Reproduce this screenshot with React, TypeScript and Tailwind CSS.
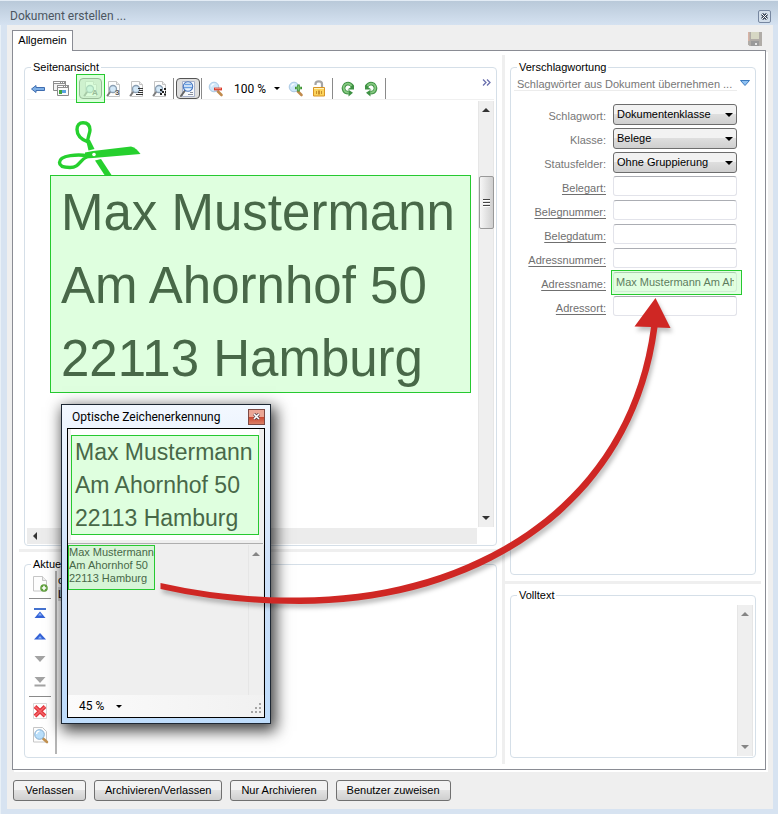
import React from "react";
import type { ReactNode } from "react";

// DATA

const addressLines = ["Max Mustermann", "Am Ahornhof 50", "22113 Hamburg"];

interface SelectField {
  id: string;
  label: string;
  value: string;
}

const selectFields: SelectField[] = [
  { id: "schlagwort", label: "Schlagwort:", value: "Dokumentenklasse" },
  { id: "klasse", label: "Klasse:", value: "Belege" },
  { id: "statusfelder", label: "Statusfelder:", value: "Ohne Gruppierung" },
];

interface TextField {
  id: string;
  label: string;
  value?: string;
}

const textFields: TextField[] = [
  { id: "belegart", label: "Belegart:" },
  { id: "belegnummer", label: "Belegnummer:" },
  { id: "belegdatum", label: "Belegdatum:" },
  { id: "adressnummer", label: "Adressnummer:" },
  {
    id: "adressname",
    label: "Adressname:",
    value: "Max Mustermann Am Ahornhof 50",
  },
  { id: "adressort", label: "Adressort:" },
];

const actions = [
  "Verlassen",
  "Archivieren/Verlassen",
  "Nur Archivieren",
  "Benutzer zuweisen",
];

// ICONS

function Lens({ cx, cy, r }: { cx: number; cy: number; r: number }) {
  return (
    <circle cx={cx} cy={cy} r={r} fill="#d3e8f8" stroke="#8b9fb3" strokeWidth="1.3" />
  );
}

function PageIcon({ children }: { children?: ReactNode }) {
  return (
    <svg width="16" height="18" viewBox="0 0 16 18">
      <path d="M2.5 1.5h8l3 3v12h-11z" fill="#fdfdfd" stroke="#c4c4c4" />
      <path d="M10.5 1.5v3h3" fill="#eee" stroke="#c4c4c4" />
      <path d="M4.5 11.5L1.5 15.5" stroke="#7d7d7d" strokeWidth="2" strokeLinecap="round" />
      <Lens cx={7} cy={9} r={3.5} />
      {children}
    </svg>
  );
}

function LetterIcon({ letter }: { letter: string }) {
  return (
    <PageIcon>
      <text x="9" y="15" fontSize="8" fontWeight="bold" fontFamily="Liberation Sans, sans-serif" fill="#555">
        {letter}
      </text>
    </PageIcon>
  );
}

function LinesIcon() {
  return (
    <PageIcon>
      <path d="M9 8.5h5M10 10.5h4M9 12.5h5M7 14.5h7" stroke="#333" />
    </PageIcon>
  );
}

function BarcodeIcon() {
  return (
    <PageIcon>
      <path
        d="M8 9h2v2H8zM12 8h2v2h-2zM10 11h2v2h-2zM13 11h1v2h-1zM8 13h2v2H8zM12 13.5h2v2h-2z"
        fill="#222"
      />
    </PageIcon>
  );
}

function BackIcon() {
  return (
    <svg width="16" height="16" viewBox="0 0 16 16">
      <path d="M1.5 8l4.500-3.500v2h8.500v3H6v2z" fill="#7fb0e6" stroke="#3f6db0" strokeLinejoin="round" />
    </svg>
  );
}

function WindowsIcon() {
  return (
    <svg width="18" height="18" viewBox="0 0 18 18">
      <path d="M1.5 1.5h12v9h-12z" fill="#f3f3f3" stroke="#8a8a8a" />
      <path d="M1 1h13v3H1z" fill="#8f8f8f" />
      <path d="M2 2.500h6M9 2.500h1M11 2.500h1" stroke="#fff" />
      <path d="M5.5 5.500h11v10h-11z" fill="#fafafa" stroke="#8a8a8a" />
      <path d="M5 5h12v3H5z" fill="#8f8f8f" />
      <path d="M6 6.500h5M12 6.500h1M14 6.500h1" stroke="#fff" />
      <path d="M7 10h3v4H7z" fill="#3fa33f" />
      <path d="M10 10h4v3h-4z" fill="#58a3e0" />
    </svg>
  );
}

function GlobeLensIcon() {
  return (
    <svg width="18" height="18" viewBox="0 0 18 18">
      <path d="M3.5 1.5h12v15h-12z" fill="#f7f9fc" stroke="#a9b3cc" />
      <path d="M11 12.500h3M9 14.500h5" stroke="#8a8f9c" />
      <path d="M6 10.500L2 16" stroke="#666" strokeWidth="2" strokeLinecap="round" />
      <circle cx="9" cy="6.500" r="4.700" fill="#eaf3fc" stroke="#4a78c0" strokeWidth="1.100" />
      <path d="M5.500 4.500h7M5 7.500h8" stroke="#6ba0e2" strokeWidth="1.500" fill="none" />
    </svg>
  );
}

function ZoomIcon({ plus }: { plus?: boolean }) {
  return (
    <svg width="16" height="16" viewBox="0 0 16 16">
      <path d="M9.500 10l4 4" stroke="#c08a4c" strokeWidth="2.600" strokeLinecap="round" />
      <circle cx="6" cy="6" r="4.800" fill="#cfe7f9" stroke="#a9c8e4" />
      <path d="M3.500 5.500a3 3 0 013-2.500" stroke="#fff" strokeWidth="1.200" fill="none" />
      {plus ? (
        <path d="M10.500 3.500v7M7 7h7" stroke="#3d8f35" strokeWidth="2.600" />
      ) : (
        <path d="M6 8h8" stroke="#d93a2b" strokeWidth="2.800" />
      )}
      {plus ? (
        <path d="M10.500 4.500v5M8 7h5" stroke="#7cc96f" strokeWidth="1" />
      ) : (
        <path d="M7 7.700h6" stroke="#f39a8c" strokeWidth="1" />
      )}
    </svg>
  );
}

function LockIcon() {
  return (
    <svg width="16" height="18" viewBox="0 0 16 18">
      <path d="M4.500 5V4a3.200 2.500 0 016.500 0v4" fill="none" stroke="#a5a5a5" strokeWidth="2.200" />
      <path d="M2.500 7.500h11v8.500h-11z" fill="#fbd45c" stroke="#d89426" />
      <path d="M3 8.500h10" stroke="#fff3bd" />
      <path d="M5 11h1v3H5zM7 10.500h2v4H7zM10 11h1v3h-1z" fill="#c98f2c" />
    </svg>
  );
}

function RotateIcon({ right }: { right?: boolean }) {
  return (
    <svg width="16" height="16" viewBox="0 0 16 16" className={right ? "-scale-x-100" : ""}>
      <path d="M12.500 6A4.500 4.500 0 103.700 8.500c.5 2 2.300 3.300 5 3.300" fill="none" stroke="#3f9244" strokeWidth="3.600" />
      <path d="M7.500 8.500h6.500V4z" fill="#3f9244" />
      <path d="M8.500 8.800l4.500 3-4.500 3.700z" fill="#3f9244" />
      <path d="M11.500 5A4 4 0 104 8.500c.4 2 2.300 3 4.500 3.200" fill="none" stroke="#86c981" strokeWidth="1.800" />
    </svg>
  );
}

function SaveIcon() {
  return (
    <svg width="14" height="14" viewBox="0 0 14 14">
      <path d="M0 0h14v14H1.500L0 12.500z" fill="#b0aca7" />
      <path d="M3 0h8v7H3z" fill="#d6d7c4" />
      <path d="M0 0h1.500v9H0z" fill="#d8b3a5" />
      <path d="M3 9h8v5H3z" fill="#9a9a9a" />
      <path d="M7 11h2v2H7z" fill="#e6e6e6" />
    </svg>
  );
}

function NewPageIcon() {
  return (
    <svg width="18" height="18" viewBox="0 0 18 18">
      <path d="M2.500 1.500h9l4 4v10.500h-13z" fill="#fdfdfd" stroke="#c6c6c6" />
      <path d="M11.500 1.500v4h4" fill="#eee" stroke="#c6c6c6" />
      <circle cx="13" cy="13" r="3.800" fill="#5f9f3c" />
      <path d="M13 10.800v4.400M10.800 13h4.400" stroke="#fff" strokeWidth="1.600" />
    </svg>
  );
}

function MoveIcon({ kind }: { kind: "top" | "up" | "down" | "bottom" }) {
  return (
    <svg width="12" height="12" viewBox="0 0 12 12">
      {kind === "top" && <path d="M0 1h12v2H0z" fill="#4472cf" />}
      {kind === "top" && <path d="M6 4.500l5.500 6.500H.5z" fill="#3462d6" />}
      {kind === "up" && <path d="M6 3l6 6.500H0z" fill="#3462d6" />}
      {(kind === "top" || kind === "up") && <path d="M4 8.500l2-2.500 2 2.500z" fill="#8db4f7" />}
      {kind === "down" && <path d="M6 9l5.500-6H.5z" fill="#a3a3a3" />}
      {kind === "bottom" && <path d="M6 7L11.500 1H.5z" fill="#a3a3a3" />}
      {kind === "bottom" && <path d="M.5 8.500h11v2H.5z" fill="#a3a3a3" />}
    </svg>
  );
}

function DeleteIcon() {
  return (
    <svg width="16" height="16" viewBox="0 0 16 16">
      <path d="M1.500.500h13v15h-13z" fill="#fff" stroke="#d9d9d9" />
      <path d="M3 3.500l10 9.500M13 3.500L3 13" stroke="#e2333b" strokeWidth="3.800" />
      <path d="M3 3.500l10 9.500M13 3.500L3 13" stroke="#f4666a" strokeWidth="1.600" />
    </svg>
  );
}

function PreviewIcon() {
  return (
    <svg width="18" height="18" viewBox="0 0 18 18">
      <path d="M2.500 1.500h9l4 4v10.500h-13z" fill="#fdfdfd" stroke="#c6c6c6" />
      <path d="M12 12.500l4 3.500" stroke="#c1904f" strokeWidth="2.600" strokeLinecap="round" />
      <circle cx="8.500" cy="8.500" r="4.800" fill="#b8defa" stroke="#86aed0" />
      <path d="M5.500 8a3 3 0 013-2.800" stroke="#fff" strokeWidth="1.300" fill="none" />
    </svg>
  );
}

function ScissorsIcon() {
  return (
    <svg width="84" height="55" viewBox="0 0 84 55" className="ml-[30px] block shrink-0 text-[#26d02e]">
      <g fill="none" stroke="currentColor" strokeWidth="3.400">
        <path d="M31 22C23 19 20 15 20 9.500C20 5 22.500 2.700 26 2.700C31 2.700 33 6 33 10C33 14 30 17 31 22Z" />
        <path d="M31 36C22 34 2.500 35 2.500 42.500C2.500 46 7 47.500 13 47.500C23 47.500 22 40 31 36Z" />
      </g>
      <path d="M29 20h4l4.500 9-6 1.500z" fill="currentColor" />
      <path d="M28 32.500L36 31l38-4.500c4 1 7 4 9.500 7.500L36 38l-8 .500z" fill="currentColor" />
      <path d="M38 40.500l6-1.500L54.500 55H47.500z" fill="currentColor" />
      <circle cx="37" cy="34.500" r="1.800" fill="#fff" />
    </svg>
  );
}

function Caret({ className }: { className?: string }) {
  return (
    <svg width="8" height="4" viewBox="0 0 8 4" className={className}>
      <path d="M0 0h8L4 4z" fill="currentColor" />
    </svg>
  );
}

// PARTS

function Group({
  title,
  className,
  children,
}: {
  title: string;
  className: string;
  children: ReactNode;
}) {
  return (
    <fieldset className={"flex min-w-0 flex-col rounded border border-[#d5dfe8] px-0.5 pb-px " + className}>
      <legend className="ml-1 px-0.5 leading-[14px] text-black">{title}</legend>
      {children}
    </fieldset>
  );
}

function Scrollbar({ kind }: { kind: "page" | "text" | "result" }) {
  return (
    <div
      className={
        "flex w-4 shrink-0 flex-col items-center justify-between border-x border-[#e6e6e6] bg-[#efefef] py-[7px] " +
        (kind === "page" ? "text-[#333]" : "text-[#858585]")
      }
    >
      <Caret className="rotate-180" />
      {kind === "page" && (
        <div className="mt-[64px] mb-auto flex h-[53px] w-[15px] flex-col items-center justify-center gap-px rounded-xs border border-[#999] bg-linear-to-r from-[#f6f6f6] to-[#cfcfcf]">
          <span className="h-0.5 w-[7px] border-t border-[#444] bg-white" />
          <span className="h-0.5 w-[7px] border-t border-[#444] bg-white" />
          <span className="h-0.5 w-[7px] border-t border-[#444] bg-white" />
        </div>
      )}
      {kind !== "result" && <Caret />}
    </div>
  );
}

function ToolButton({ label, children }: { label: string; children: ReactNode }) {
  return (
    <button type="button" aria-label={label} className="flex w-[23px] items-center justify-center">
      {children}
    </button>
  );
}

function Divider() {
  return <span className="h-[21px] w-px shrink-0 bg-[#8a8a8a]" />;
}

function Toolbar() {
  return (
    <div className="flex h-[26px] shrink-0 items-center border-b border-[#f0f0f0] pt-1">
      <div className="-ml-px flex">
        <ToolButton label="Zurück">
          <BackIcon />
        </ToolButton>
        <ToolButton label="Fenster">
          <WindowsIcon />
        </ToolButton>
      </div>
      <span className="ml-1 flex">
        <Divider />
      </span>
      <button
        type="button"
        aria-label="Text erkennen"
        className="relative ml-0.5 flex h-[21px] w-[23px] items-center justify-center rounded border border-[#555] bg-[#dcdcdc]"
      >
        <LetterIcon letter="A" />
        <span className="absolute -inset-x-1 -top-[5px] -bottom-[5px] border border-[#26c930] bg-[#c4ffc4]/60" />
      </button>
      <ToolButton label="Zahl erkennen">
        <LetterIcon letter="3" />
      </ToolButton>
      <ToolButton label="Absatz erkennen">
        <LinesIcon />
      </ToolButton>
      <ToolButton label="Barcode erkennen">
        <BarcodeIcon />
      </ToolButton>
      <span className="ml-0.5 flex">
        <Divider />
      </span>
      <button
        type="button"
        aria-label="Lupe"
        className="mr-px ml-0.5 flex h-[21px] w-6 items-center justify-center rounded border border-[#555] bg-[#dedede]"
      >
        <GlobeLensIcon />
      </button>
      <Divider />
      <span className="ml-0.5 flex">
        <ToolButton label="Verkleinern">
          <ZoomIcon />
        </ToolButton>
      </span>
      <button type="button" className="mr-1 ml-[7px] flex items-center gap-2 font-[Roboto,sans-serif] text-xs text-black">
        100 %
        <Caret className="h-[3px] w-[6px]" />
      </button>
      <ToolButton label="Vergrößern">
        <ZoomIcon plus />
      </ToolButton>
      <ToolButton label="Entsperren">
        <LockIcon />
      </ToolButton>
      <span className="mr-[3px] ml-0.5 flex">
        <Divider />
      </span>
      <ToolButton label="Links drehen">
        <RotateIcon />
      </ToolButton>
      <ToolButton label="Rechts drehen">
        <RotateIcon right />
      </ToolButton>
      <span className="ml-[3px] flex">
        <Divider />
      </span>
      <button type="button" aria-label="Mehr" className="mr-[3px] mb-3 ml-auto text-[#6a6fae]">
        <svg width="9" height="7" viewBox="0 0 9 7" fill="none" stroke="currentColor" strokeWidth="1.300">
          <path d="M1 .5l3 3-3 3M5 .5l3 3-3 3" />
        </svg>
      </button>
    </div>
  );
}

function PageView() {
  return (
    <Group title="Seitenansicht" className="flex-1">
      <Toolbar />
      <div className="flex min-h-[427px] flex-1 pt-px">
        <div className="min-w-0 flex-1 overflow-hidden pt-[19px]">
          <ScissorsIcon />
          <div className="ml-[23px] h-[218px] w-[421px] border border-[#26c930] bg-[#dfffdf] pl-2.5 font-['Liberation_Sans',sans-serif] text-[51px] leading-[73px] whitespace-nowrap text-[#486848]">
            {addressLines.map((line) => (
              <p key={line}>{line}</p>
            ))}
          </div>
        </div>
        <Scrollbar kind="page" />
      </div>
      <div className="mt-px mr-[17px] flex h-4 shrink-0 items-center bg-[#ececec] pl-1 text-[#333]">
        <Caret className="rotate-90" />
      </div>
    </Group>
  );
}

function PageList() {
  return (
    <Group title="Aktue" className="shrink-0">
      <div className="flex h-[185px] pb-0.5">
        <div className="flex w-[30px] flex-col items-center border-r-2 border-[#b5b5b5] pr-0.5 text-[0px]">
          <button type="button" aria-label="Neue Seite" className="mt-1 h-[18px]">
            <NewPageIcon />
          </button>
          <span className="mt-[5px] h-px w-[22px] bg-[#8a8a8a]" />
          <div className="mt-2 flex flex-col items-center gap-[11px]">
            <button type="button" aria-label="Ganz nach oben">
              <MoveIcon kind="top" />
            </button>
            <button type="button" aria-label="Nach oben">
              <MoveIcon kind="up" />
            </button>
            <button type="button" aria-label="Nach unten">
              <MoveIcon kind="down" />
            </button>
            <button type="button" aria-label="Ganz nach unten">
              <MoveIcon kind="bottom" />
            </button>
          </div>
          <span className="mt-2 h-px w-[22px] bg-[#8a8a8a]" />
          <button type="button" aria-label="Löschen" className="mt-1.5">
            <DeleteIcon />
          </button>
          <button type="button" aria-label="Vorschau" className="mt-[7px]">
            <PreviewIcon />
          </button>
        </div>
        <div className="pt-0.5 pl-px leading-[14px] text-black">
          <p>c</p>
          <p className="bg-[#d9d9d9]">L</p>
        </div>
      </div>
    </Group>
  );
}

function Keywords() {
  return (
    <Group title="Verschlagwortung" className="flex-1">
      <div className="flex h-[17px] shrink-0 items-center pl-px">
        <button type="button" className="h-[17px] flex-1 border-b border-[#ececec] pl-[3px] text-left leading-5 whitespace-nowrap text-[#777]">
          Schlagwörter aus Dokument übernehmen ...
        </button>
        <svg width="10" height="6" viewBox="0 0 10 6" className="mx-[3px]">
          <path d="M.5.500h9L5 5.500z" fill="#8fc1f2" stroke="#3c7bbf" />
        </svg>
      </div>
      <div className="mt-[13px] flex flex-col gap-[3px] pr-4">
        {selectFields.map((field) => (
          <div key={field.id} className="flex h-[21px] items-start justify-end gap-[7px]">
            <label htmlFor={field.id} className="pt-1 leading-4 text-[#777]">
              {field.label}
            </label>
            <div className="relative w-[124px]">
              <select
                id={field.id}
                className="h-[21px] w-full appearance-none rounded-[3px] border border-[#6d6d6d] bg-linear-to-b from-[#f2f2f2] from-50% via-[#dedede] via-50% to-[#cfcfcf] pl-[3px] text-black"
              >
                <option>{field.value}</option>
              </select>
              <Caret className="pointer-events-none absolute top-[9px] right-1 text-black" />
            </div>
          </div>
        ))}
        {textFields.map((field) => (
          <div key={field.id} className="flex h-[21px] items-start justify-end gap-[7px]">
            <label htmlFor={field.id} className="pt-1 leading-4 text-[#6f6f6f] underline underline-offset-2">
              {field.label}
            </label>
            <div className="relative w-[124px]">
              <input
                id={field.id}
                type="text"
                defaultValue={field.value}
                className="block h-5 w-full rounded-[3px] border border-[#e2e3ea] border-t-[#abadb3] bg-white px-0.5 text-[#222]"
              />
              {field.value && (
                <span className="pointer-events-none absolute -top-0.5 -right-[5px] -bottom-[3px] -left-0.5 border border-[#26c930] bg-[#b4ffb4]/40" />
              )}
            </div>
          </div>
        ))}
      </div>
    </Group>
  );
}

function FullText() {
  return (
    <Group title="Volltext" className="shrink-0">
      <div className="flex h-[154px] pt-[3px]">
        <textarea aria-label="Volltext" className="min-w-0 flex-1 resize-none bg-white" />
        <Scrollbar kind="text" />
      </div>
    </Group>
  );
}

// floating OCR tool window
function OcrWindow() {
  return (
    <div className="absolute top-[404px] left-[61px] flex h-[320px] w-[210px] flex-col border border-[#1d2733] bg-linear-to-b from-[#f3f8ff] via-[#cfe2fa] to-[#bedcfb] px-[5px] pb-[5px] shadow-[3px_5px_14px_2px_rgba(0,0,0,0.75)]">
      <div className="flex h-[23px] shrink-0 items-center justify-between pl-[5px]">
        <h2 className="font-[Roboto,sans-serif] text-xs text-black">Optische Zeichenerkennung</h2>
        <button
          type="button"
          aria-label="Schließen"
          className="flex h-4 w-[17px] items-center justify-center border border-[#7d4a45] bg-linear-to-b from-[#eba695] from-50% via-[#c9452f] via-50% to-[#db7f66]"
        >
          <svg width="7" height="7" viewBox="0 0 7 7">
            <path d="M1 1l5 5M6 1L1 6" stroke="#4d3b45" strokeWidth="3" />
            <path d="M1 1l5 5M6 1L1 6" stroke="#fff" strokeWidth="1.600" />
          </svg>
        </button>
      </div>
      <div className="flex flex-1 flex-col border border-black bg-[#efefef]">
        <div className="mr-[5px] ml-[3px] bg-white pt-1.5 pb-[5px]">
          <div className="h-[100px] border border-[#26c930] bg-[#dfffdf] pl-[3px] font-['Liberation_Sans',sans-serif] text-[23px] leading-[33px] whitespace-nowrap text-[#486848]">
            {addressLines.map((line) => (
              <p key={line}>{line}</p>
            ))}
          </div>
        </div>
        <div className="mt-[3px] mr-px h-px bg-[#aeaeae]" />
        <div className="flex flex-1 pt-px">
          <div className="flex-1">
            <div className="h-[45px] w-[87px] border border-[#26c930] bg-[#d7f5d7] leading-[13px] whitespace-nowrap text-[#486848]">
              {addressLines.map((line) => (
                <p key={line}>{line}</p>
              ))}
            </div>
          </div>
          <Scrollbar kind="result" />
        </div>
        <div className="flex h-[22px] shrink-0 items-center justify-between bg-linear-to-r from-[#fbfbfb] to-[#f1f1f1] pr-[3px] pl-[11px]">
          <button type="button" className="flex items-center gap-3 font-[Roboto,sans-serif] text-xs text-black">
            45 %
            <Caret className="h-[3px] w-[6px]" />
          </button>
          <svg width="10" height="10" viewBox="0 0 10 10" fill="#a6a6a6" className="mt-1">
            <path d="M8 0h2v2H8zM4 4h2v2H4zM8 4h2v2H8zM0 8h2v2H0zM4 8h2v2H4zM8 8h2v2H8z" />
          </svg>
        </div>
      </div>
    </div>
  );
}

// red arrow from the recognised text to the address field
function TransferArrow() {
  return (
    <svg
      width="778"
      height="814"
      viewBox="0 0 778 814"
      className="pointer-events-none absolute top-0 left-0 drop-shadow-[2px_4px_2px_rgba(0,0,0,0.25)]"
    >
      <path
        d="M160.500 583C205 593 252 598 300 597.500C468 597 627 508 651 327L634.500 326.500L655.500 298L670.500 328L657.500 327.500C633 512 472 604 300 604C252 604 205 599 160.500 589Z"
        fill="#cf2724"
      />
    </svg>
  );
}

export default function App() {
  return (
    <div className="relative flex min-h-screen flex-col overflow-hidden bg-[#d7e3f1] pr-[5px] pb-1.5 pl-[7px] font-['Liberation_Sans',sans-serif] text-[11px] shadow-[inset_1px_0_0_#e8f0f7]">
      <header className="-mr-[5px] -ml-[7px] flex h-[25px] shrink-0 items-center justify-between border-t border-[#e3ecf5] bg-linear-to-b from-[#b9c9d9] to-[#d5e2f1] pt-1.5 pr-[7px] pl-2.5">
        <h1 className="font-[Roboto,sans-serif] text-xs text-[#4c5661]">Dokument erstellen ...</h1>
        <button
          type="button"
          aria-label="Schließen"
          className="flex h-[13px] w-[13px] items-center justify-center rounded-xs border border-[#7787a0] bg-[#d3deea]"
        >
          <svg width="7" height="7" viewBox="0 0 7 7">
            <path d="M1 1l5 5M6 1L1 6" stroke="#3a4658" strokeWidth="3" />
            <path d="M1 1l5 5M6 1L1 6" stroke="#fff" strokeWidth="1" />
          </svg>
        </button>
      </header>

      <main className="flex flex-1 flex-col bg-[#efefef] pt-[5px] pl-[5px]">
        <div className="flex items-start justify-between pr-[11px]">
          <button
            type="button"
            className="relative z-10 -mb-px h-[21px] w-[61px] border border-b-0 border-[#8a8c94] bg-white pb-0.5 text-center text-black"
          >
            Allgemein
          </button>
          <button type="button" aria-label="Speichern" className="mt-0.5">
            <SaveIcon />
          </button>
        </div>

        <div className="mr-[7px] flex flex-1 border border-[#8a8c94] bg-white pt-1 pb-[5px] shadow-[2px_2px_0_0_#fff]">
          <section className="flex min-w-0 flex-1 flex-col pt-[5px] pr-[5px] pb-1.5 pl-[11px]">
            <PageView />
            <div className="my-[3px] -mr-[5px] -ml-[5px] h-[3px] shrink-0 bg-[#efefef]" />
            <div className="h-0.5 shrink-0" />
            <PageList />
          </section>
          <div className="w-[3px] shrink-0 bg-[#efefef]" />
          <section className="flex w-[260px] shrink-0 flex-col pt-[5px] pr-[9px] pb-1.5 pl-[5px]">
            <Keywords />
            <div className="mt-1.5 mb-1 -mr-[5px] -ml-[5px] h-[3px] shrink-0 bg-[#efefef]" />
            <FullText />
          </section>
        </div>

        <footer className="flex gap-2 pt-2.5 pb-2 pl-px">
          {actions.map((action) => (
            <button
              key={action}
              type="button"
              className="h-[21px] min-w-[73px] rounded-[3px] border border-[#707070] bg-linear-to-b from-[#f3f3f3] from-50% via-[#e2e2e2] via-50% to-[#cfcfcf] px-2.5 text-black"
            >
              {action}
            </button>
          ))}
        </footer>
      </main>

      <OcrWindow />
      <TransferArrow />
    </div>
  );
}
